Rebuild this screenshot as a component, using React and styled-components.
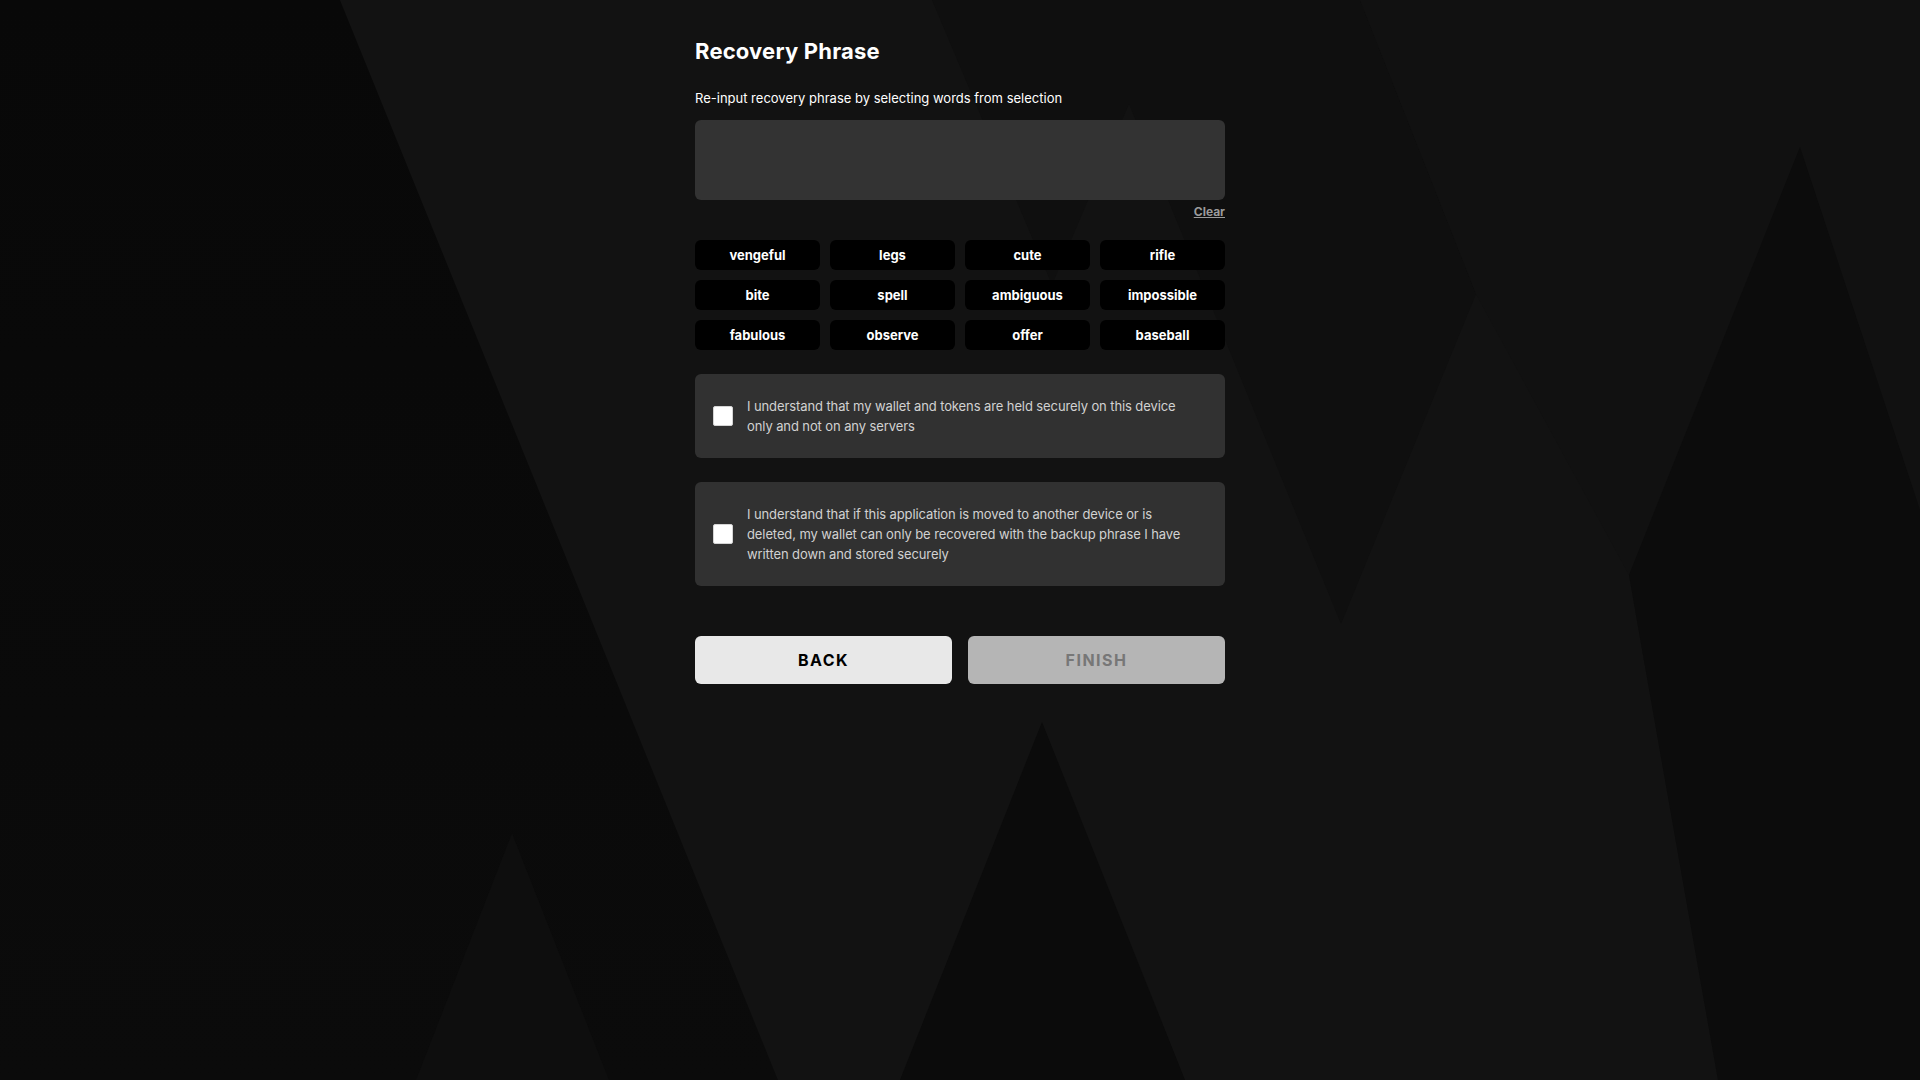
import React, { useState } from 'react'
import styled, { createGlobalStyle } from 'styled-components'

const WORDS = [
  'vengeful', 'legs', 'cute', 'rifle',
  'bite', 'spell', 'ambiguous', 'impossible',
  'fabulous', 'observe', 'offer', 'baseball',
]

const NOTICES = [
  'I understand that my wallet and tokens are held securely on this device only and not on any servers',
  'I understand that if this application is moved to another device or is deleted, my wallet can only be recovered with the backup phrase I have written down and stored securely',
]

const Backdrop = () => (
  <BackdropSvg viewBox="0 0 1920 1080" preserveAspectRatio="none">
    <defs>
      <linearGradient id="leftShade" x1="0" y1="0" x2="0" y2="1">
        <stop offset="0" stopColor="#080808" />
        <stop offset="1" stopColor="#0b0b0b" />
      </linearGradient>
    </defs>
    <polygon points="0,0 340,0 778,1080 0,1080" fill="url(#leftShade)" />
    <polygon points="512,833 416,1080 609,1080" fill="#0e0e0e" />
    <polygon points="932,0 1360,0 1476,294 1341,624 1129,104 1052,285" fill="#0f0f0f" />
    <polygon points="1360,0 1920,0 1920,1080 1718,1080 1629,575 1476,294" fill="#111111" />
    <polygon points="1800,147 1920,510 1920,1080 1718,1080 1665,780 1629,575" fill="#0c0c0c" />
    <polygon points="1042,722 900,1080 1185,1080" fill="#0b0b0b" />
  </BackdropSvg>
)

const App = () => {
  const [picked, setPicked] = useState([])
  const [agreed, setAgreed] = useState([false, false])

  const toggle = (i) => setAgreed(a => a.map((v, k) => (k === i ? !v : v)))

  return (
    <Page>
      <GlobalStyle />
      <Backdrop />
      <Column>
        <Title>Recovery Phrase</Title>
        <Hint>Re-input recovery phrase by selecting words from selection</Hint>
        <PhraseBox>{picked.join(' ')}</PhraseBox>
        <ClearRow>
          <ClearButton onClick={() => setPicked([])}>Clear</ClearButton>
        </ClearRow>

        <WordGrid>
          {WORDS.map(w => (
            <WordChip key={w} onClick={() => setPicked(p => [...p, w])}>{w}</WordChip>
          ))}
        </WordGrid>

        <Notices>
          {NOTICES.map((t, i) => (
            <Notice key={i} onClick={() => toggle(i)}>
              <Check $on={agreed[i]} />
              <NoticeText>{t}</NoticeText>
            </Notice>
          ))}
        </Notices>

        <ButtonRow>
          <ActionButton>BACK</ActionButton>
          <ActionButton $disabled>FINISH</ActionButton>
        </ButtonRow>
      </Column>
    </Page>
  )
}

export default App


const GlobalStyle = createGlobalStyle`
  html, body {
    margin:0;
    padding:0;
    background:#121212;
  }
  body {
    font-family: Inter, "Noto Sans", sans-serif;
    color:#fff;
  }
  * { box-sizing:border-box; }
`

const Page = styled.div`
    position:relative;
    min-height:100vh;
    overflow:hidden;
    background:#121212;
`

const BackdropSvg = styled.svg`
    position:absolute;
    inset:0;
    width:100%;
    height:100%;
    display:block;
`

const Column = styled.main`
    position:relative;
    width:530px;
    margin:0 auto;
    padding-top:38px;
    display:flex;
    flex-direction:column;
`

const Title = styled.h1`
    margin:0;
    font-size:22px;
    line-height:27px;
    font-weight:700;
    letter-spacing:0.2px;
`

const Hint = styled.p`
    margin:25px 0 0;
    font-size:13px;
    line-height:16px;
    font-weight:400;
`

const PhraseBox = styled.div`
    margin-top:14px;
    height:80px;
    padding:14px 16px;
    background:#333333;
    border-radius:6px;
    font-size:14px;
    font-weight:600;
`

const ClearRow = styled.div`
    display:flex;
    justify-content:flex-end;
    margin-top:5px;
`

const ClearButton = styled.button`
    padding:0;
    border:none;
    background:none;
    font-family:inherit;
    font-size:12px;
    line-height:14px;
    font-weight:700;
    color:#9b9b9b;
    text-decoration:underline;
    cursor:pointer;
`

const WordGrid = styled.div`
    margin-top:21px;
    display:grid;
    grid-template-columns:repeat(4, 1fr);
    gap:10px;
`

const WordChip = styled.button`
    height:30px;
    border:none;
    border-radius:6px;
    background:#000;
    color:#fff;
    font-family:inherit;
    font-size:13px;
    font-weight:700;
    cursor:pointer;
`

const Notices = styled.div`
    margin-top:24px;
    display:flex;
    flex-direction:column;
    gap:24px;
`

const Notice = styled.label`
    display:flex;
    align-items:center;
    gap:14px;
    padding:22px 30px 22px 18px;
    background:#313131;
    border-radius:6px;
    cursor:pointer;
`

const Check = styled.span`
    flex-shrink:0;
    width:20px;
    height:20px;
    background:${p => (p.$on ? '#8a8a8a' : '#fff')};
    border:1px solid #d4d4d4;
    border-radius:2px;
`

const NoticeText = styled.span`
    font-size:13px;
    line-height:20px;
    letter-spacing:-0.1px;
    color:#d2d2d2;
`

const ButtonRow = styled.div`
    margin-top:50px;
    display:grid;
    grid-template-columns:1fr 1fr;
    gap:16px;
`

const ActionButton = styled.button`
    height:48px;
    border:none;
    border-radius:6px;
    font-family:inherit;
    font-size:16px;
    font-weight:700;
    letter-spacing:1.5px;
    background:${p => (p.$disabled ? '#b5b5b5' : '#e8e8e8')};
    color:${p => (p.$disabled ? '#777' : '#000')};
    cursor:${p => (p.$disabled ? 'default' : 'pointer')};
`
